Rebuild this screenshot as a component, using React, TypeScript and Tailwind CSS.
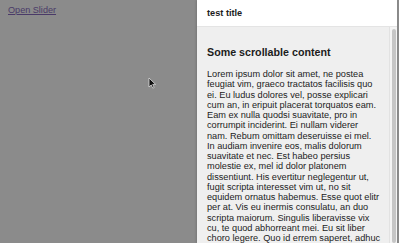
const lines = [
  'Lorem ipsum dolor sit amet, ne postea',
  'feugiat vim, graeco tractatos facilisis quo',
  'ei. Eu ludus dolores vel, posse explicari',
  'cum an, in eripuit placerat torquatos eam.',
  'Eam ex nulla quodsi suavitate, pro in',
  'corrumpit inciderint. Ei nullam viderer',
  'nam. Rebum omittam deseruisse ei mel.',
  'In audiam invenire eos, malis dolorum',
  'suavitate et nec. Est habeo persius',
  'molestie ex, mel id dolor platonem',
  'dissentiunt. His evertitur neglegentur ut,',
  'fugit scripta interesset vim ut, no sit',
  'equidem ornatus habemus. Esse quot elitr',
  'per at. Vis eu inermis consulatu, an duo',
  'scripta maiorum. Singulis liberavisse vix',
  'cu, te quod abhorreant mei. Eu sit liber',
  'choro legere. Quo id errem saperet, adhuc',
];

export default function App() {
  return (
    <div
      className="relative flex h-[243px] w-[399px] overflow-hidden bg-[#8b8b8b] text-[#1c1c1c]"
      style={{ fontFamily: '"Liberation Sans", Arial, sans-serif' }}
    >
      {/* page behind the overlay */}
      <div className="flex-1 pl-[8px] pt-[4px]">
        <a href="#" className="block text-[9.1px] leading-[12px] text-[#4a3a68] underline">
          Open Slider
        </a>
      </div>

      {/* mouse cursor */}
      <svg
        className="absolute left-[148px] top-[77px]"
        width="9"
        height="12"
        viewBox="0 0 9 12"
      >
        <path d="M1 1 L1 10 L3.2 8 L4.8 11.2 L6.2 10.5 L4.7 7.4 L7.6 7.4 Z" fill="#111" stroke="#ddd" strokeWidth="0.8" />
      </svg>

      {/* slider panel */}
      <div className="mr-[2px] flex w-[200px] flex-col shadow-[-1px_0_2px_rgba(0,0,0,0.15)]">
        <div className="flex h-[27px] items-center border-b border-[#e4e4e4] bg-white pl-[10px]">
          <span className="text-[9.2px] font-bold leading-[12px]">test title</span>
        </div>
        <div className="flex flex-1 overflow-hidden bg-[#efefef]">
          <div className="flex-1 overflow-hidden pl-[10px] pt-[19px]">
            <h2 className="text-[10.7px] font-bold leading-[13px]">Some scrollable content</h2>
            <div className="mt-[10px] text-[9.2px] leading-[10.25px]">
              {lines.map((l) => (
                <div key={l} className="whitespace-nowrap">
                  {l}
                </div>
              ))}
            </div>
          </div>
          <div className="flex w-[8px] justify-center border-l border-[#e2e2e2] bg-[#f4f4f4] pt-[2px]">
            <div className="h-full w-[4px] rounded-[2px] bg-[#c6c6c6]" />
          </div>
        </div>
      </div>
    </div>
  );
}
